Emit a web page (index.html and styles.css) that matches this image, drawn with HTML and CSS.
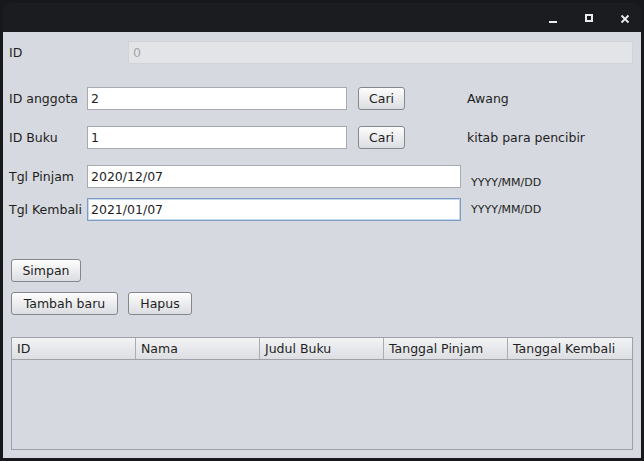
FILE: index.html
```html
<!DOCTYPE html>
<html>
<head>
<meta charset="utf-8">
<link rel="stylesheet" href="styles.css">
</head>
<body>
<div class="window">
  <div class="titlebar">
    <svg class="tb-icon" width="10" height="10" viewBox="0 0 10 10"><rect x="1" y="7" width="8" height="2" fill="#ececec"/></svg>
    <svg class="tb-icon" width="10" height="10" viewBox="0 0 10 10"><rect x="2" y="1" width="6" height="6" fill="none" stroke="#ececec" stroke-width="2"/></svg>
    <svg class="tb-icon" width="10" height="10" viewBox="0 0 10 10"><path d="M1.5 1.5 L8.5 8.5 M8.5 1.5 L1.5 8.5" stroke="#ececec" stroke-width="1.8"/></svg>
  </div>
  <div class="content">
    <div class="row row-id">
      <span class="label label-id">ID</span>
      <div class="field field-disabled field-full">0</div>
    </div>
    <div class="row row-anggota">
      <span class="label">ID anggota</span>
      <div class="field field-short">2</div>
      <button class="btn btn-cari">Cari</button>
      <span class="result">Awang</span>
    </div>
    <div class="row row-buku">
      <span class="label">ID Buku</span>
      <div class="field field-short">1</div>
      <button class="btn btn-cari">Cari</button>
      <span class="result">kitab para pencibir</span>
    </div>
    <div class="row row-pinjam">
      <span class="label">Tgl Pinjam</span>
      <div class="field field-long">2020/12/07</div>
      <span class="hint hint-low">YYYY/MM/DD</span>
    </div>
    <div class="row row-kembali">
      <span class="label">Tgl Kembali</span>
      <div class="field field-long field-focus">2021/01/07</div>
      <span class="hint hint-mid">YYYY/MM/DD</span>
    </div>
    <div class="row row-simpan">
      <button class="btn btn-first btn-simpan">Simpan</button>
    </div>
    <div class="row row-actions">
      <button class="btn btn-first btn-tambah">Tambah baru</button>
      <button class="btn btn-hapus">Hapus</button>
    </div>
    <div class="table">
      <div class="thead">
        <div class="th">ID</div>
        <div class="th">Nama</div>
        <div class="th">Judul Buku</div>
        <div class="th">Tanggal Pinjam</div>
        <div class="th th-last">Tanggal Kembali</div>
      </div>
      <div class="tbody"></div>
    </div>
  </div>
</div>
</body>
</html>
```

FILE: styles.css
```css
html, body {
  margin: 0;
  padding: 0;
}
body {
  background: #17181b;
  width: 644px;
  height: 461px;
  overflow: hidden;
  font-family: "DejaVu Sans", sans-serif;
  font-size: 12.5px;
  color: #1e1e1e;
}
.window {
  margin: 3px 0 0 3px;
  width: 638px;
}
.titlebar {
  height: 29px;
  background: #1b1c20;
  border-radius: 7px 7px 0 0;
  display: flex;
  align-items: center;
  justify-content: flex-end;
  padding-right: 11px;
  gap: 26px;
  box-sizing: border-box;
}
.tb-icon {
  display: block;
  margin-top: 2px;
}
.content {
  height: 426px;
  background: #d6d9df;
  padding-left: 6px;
  box-sizing: border-box;
  display: flex;
  flex-direction: column;
  overflow: hidden;
}
.row {
  display: flex;
  align-items: center;
}
.row-id { margin-top: 9px; height: 23px; }
.row-anggota { margin-top: 23px; height: 23px; }
.row-buku { margin-top: 16px; height: 23px; }
.row-pinjam { margin-top: 16px; height: 23px; align-items: flex-start; }
.row-kembali { margin-top: 10px; height: 23px; align-items: flex-start; }
.row-simpan { margin-top: 38px; height: 23px; }
.row-actions { margin-top: 10px; height: 23px; }
.row-pinjam .label, .row-kembali .label { margin-top: 4px; }
.label {
  width: 78px;
  flex: none;
  white-space: nowrap;
}
.label-id { width: 119px; }
.field {
  height: 23px;
  box-sizing: border-box;
  background: #ffffff;
  border: 1px solid #a6a9ae;
  padding: 0 3px;
  line-height: 21px;
  flex: none;
}
.field-disabled {
  background: #e2e4e8;
  border-color: #d0d3d8;
  color: #a3a6ab;
  padding-left: 4px;
}
.field-full { width: 505px; }
.field-short { width: 260px; }
.field-long { width: 374px; }
.field-focus {
  border: 1px solid #7b9ec9;
  box-shadow: inset 0 0 0 1px #c9d7ea;
}
.btn {
  font-family: "DejaVu Sans", sans-serif;
  font-size: 12.5px;
  color: #1e1e1e;
  height: 23px;
  box-sizing: border-box;
  border: 1px solid #84878d;
  border-radius: 3px;
  background: linear-gradient(#fdfdfd, #dcdde1);
  padding: 0;
  margin: 0;
  line-height: 20px;
  text-align: center;
  flex: none;
}
.btn-cari { margin-left: 11px; width: 47px; }
.btn-first { margin-left: 2px; }
.btn-simpan { width: 70px; }
.btn-tambah { width: 107px; }
.btn-hapus { margin-left: 10px; width: 64px; }
.result { margin-left: 62px; white-space: nowrap; }
.hint {
  font-size: 11px;
  margin-left: 10px;
  white-space: nowrap;
}
.hint-low { margin-top: 11px; }
.hint-mid { margin-top: 5px; }
.table {
  margin-top: 22px;
  margin-left: 2px;
  width: 622px;
  height: 113px;
  box-sizing: border-box;
  border: 1px solid #9ea1a7;
  display: flex;
  flex-direction: column;
}
.thead {
  display: flex;
  height: 21px;
  border-bottom: 1px solid #9ea1a7;
  background: linear-gradient(#f2f3f5, #dcdee2);
  flex: none;
}
.th {
  width: 124px;
  box-sizing: border-box;
  border-right: 1px solid #a9acb1;
  padding-left: 5px;
  line-height: 21px;
  white-space: nowrap;
}
.th-last { flex: 1; border-right: none; }
.tbody {
  flex: 1;
  background: #d6d9df;
}
```
